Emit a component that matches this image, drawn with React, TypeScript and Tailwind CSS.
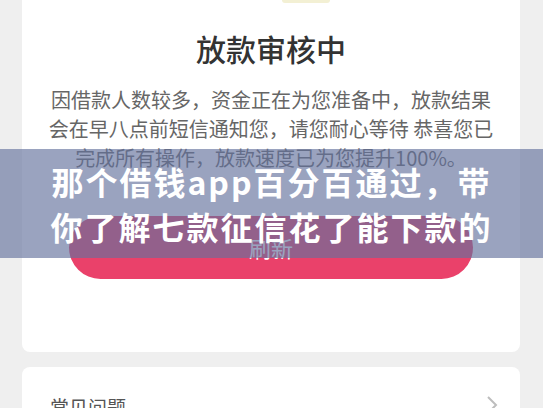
import React from "react";

export default function App() {
  return (
    <div className="relative h-[408px] w-[543px] overflow-hidden bg-[#efefef] font-['Noto_Sans_CJK_SC','Noto_Sans',sans-serif]">
      <div className="pl-[22px] pr-[23px]">
        <div className="flex h-[352px] flex-col items-center rounded-b-[8px] bg-white">
          <div className="ml-[70px] h-[3px] w-[48px] rounded-b-full bg-[#f3f0d4]" />
          <div className="mt-[27px] text-[30px] leading-[36px] font-medium text-[#333333]">
            放款审核中
          </div>
          <div className="mt-[18.5px] whitespace-nowrap text-center text-[20px] leading-[29px] text-[#666666]">
            因借款人数较多，资金正在为您准备中，放款结果
            <br />
            会在早八点前短信通知您，请您耐心等待 恭喜您已
            <br />
            完成所有操作，放款速度已为您提升100%。
          </div>
          <button className="mt-[44.5px] flex h-[63px] w-[404px] items-center justify-center rounded-full bg-[#ea416a] text-[22px] text-white">
            刷新
          </button>
        </div>
        <div className="mt-[15px] flex h-[80px] items-start justify-between rounded-t-[8px] bg-white pl-[28px] pr-[22px] pt-[27px]">
          <span className="text-[19px] leading-[26px] text-[#555555]">常见问题</span>
          <svg width="12" height="20" viewBox="0 0 12 20" className="mt-[1px]">
            <polyline points="2,2 10,10 2,18" fill="none" stroke="#bdbdbd" strokeWidth="2" />
          </svg>
        </div>
      </div>
      <div className="absolute left-0 right-0 top-[149px] flex h-[109px] flex-col items-center justify-center bg-[rgba(100,114,156,0.65)]">
        <div className="whitespace-nowrap text-center text-[32px] font-bold leading-[45px] tracking-[2px] text-white">
          那个借钱app百分百通过，带
          <br />
          你了解七款征信花了能下款的
        </div>
      </div>
    </div>
  );
}
